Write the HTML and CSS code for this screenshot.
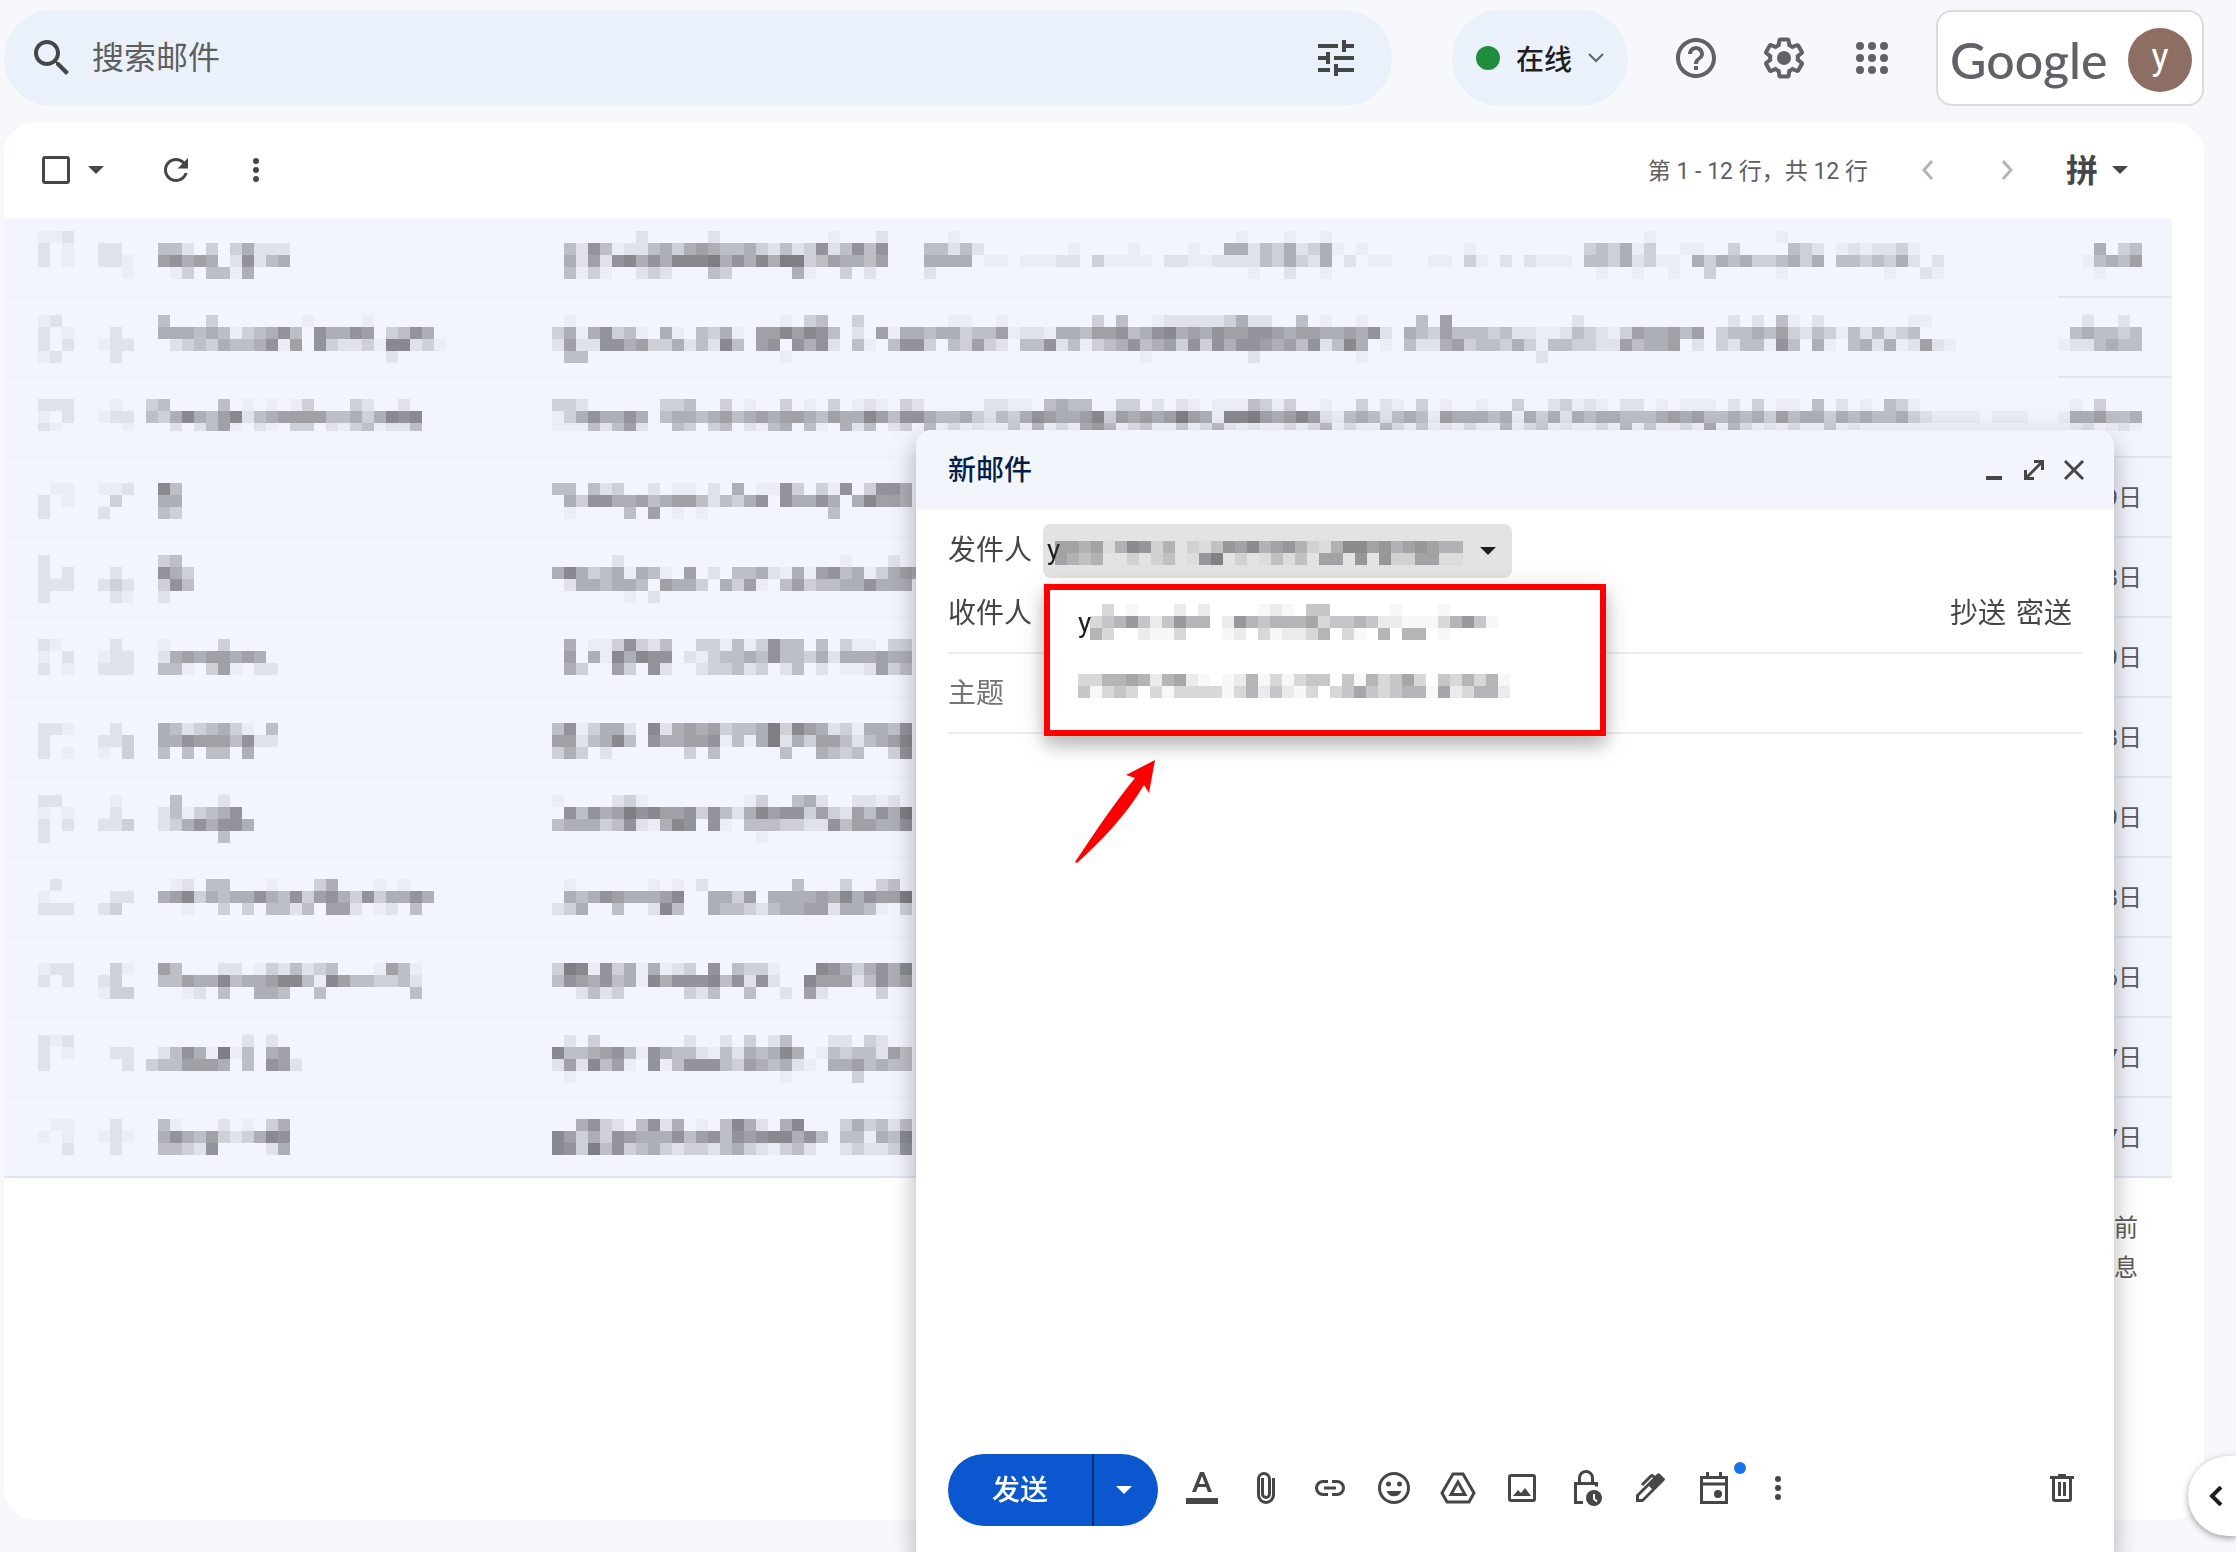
FILE: index.html
```html
<!DOCTYPE html>
<html lang="zh-CN">
<head>
<meta charset="utf-8">
<title>收件箱 - 新邮件</title>
<link rel="stylesheet" href="styles.css">
</head>
<body>
<header class="topbar">
  <form class="search" role="search">
    <button class="icon-btn" type="button" aria-label="搜索"><svg class="ic48" viewBox="0 0 24 24"><path d="M15.5 14h-.79l-.28-.27C15.41 12.59 16 11.11 16 9.5 16 5.91 13.09 3 9.5 3S3 5.91 3 9.5 5.91 16 9.5 16c1.61 0 3.09-.59 4.23-1.57l.27.28v.79l5 4.99L20.49 19l-4.99-5zm-6 0C7.01 14 5 11.99 5 9.5S7.01 5 9.5 5 14 7.01 14 9.5 11.99 14 9.5 14z"/></svg></button>
    <input class="search-input" type="text" placeholder="搜索邮件" aria-label="搜索邮件">
    <button class="icon-btn" type="button" aria-label="搜索选项"><svg class="ic48" viewBox="0 0 24 24"><path d="M3 17v2h6v-2H3zM3 5v2h10V5H3zm10 16v-2h8v-2h-8v-2h-2v6h2zM7 9v2H3v2h4v2h2V9H7zm14 4v-2H11v2h10zm-6-4h2V7h4V5h-4V3h-2v6z"/></svg></button>
  </form>
  <button class="status" type="button"><span class="status-dot"></span>在线<svg class="status-chev" viewBox="0 0 16 10"><path d="M1 1l7 7 7-7"/></svg></button>
  <nav class="tools">
    <button class="icon-btn" type="button" aria-label="支持"><svg class="ic48" viewBox="0 0 24 24"><path d="M11 18h2v-2h-2v2zm1-16C6.48 2 2 6.48 2 12s4.48 10 10 10 10-4.48 10-10S17.52 2 12 2zm0 18c-4.41 0-8-3.59-8-8s3.59-8 8-8 8 3.59 8 8-3.59 8-8 8zm0-14c-2.21 0-4 1.79-4 4h2c0-1.1.9-2 2-2s2 .9 2 2c0 2-3 1.75-3 5h2c0-2.25 3-2.5 3-5 0-2.21-1.79-4-4-4z"/></svg></button>
    <button class="icon-btn" type="button" aria-label="设置"><svg class="ic48" viewBox="0 0 24 24"><path d="M13.85 22.25h-3.7c-.74 0-1.36-.54-1.45-1.27l-.27-1.89c-.27-.14-.53-.29-.79-.46l-1.8.72c-.7.26-1.47-.03-1.81-.65L2.2 15.53c-.35-.66-.2-1.44.36-1.88l1.53-1.19c-.01-.15-.02-.3-.02-.46 0-.15.01-.31.02-.46l-1.52-1.19c-.59-.45-.74-1.26-.37-1.88l1.85-3.19c.34-.62 1.11-.9 1.79-.63l1.81.73c.26-.17.52-.32.78-.46l.27-1.91c.09-.7.71-1.25 1.44-1.25h3.7c.74 0 1.36.54 1.45 1.27l.27 1.89c.27.14.53.29.79.46l1.8-.72c.71-.26 1.48.03 1.82.65l1.84 3.18c.36.66.2 1.44-.36 1.88l-1.52 1.19c.01.15.02.3.02.46s-.01.31-.02.46l1.52 1.19c.56.45.72 1.23.37 1.86l-1.86 3.22c-.34.62-1.11.9-1.8.63l-1.8-.72c-.26.17-.52.32-.78.46l-.27 1.91c-.1.68-.72 1.22-1.46 1.22zm-3.23-2h2.76l.37-2.55.53-.22c.44-.18.88-.44 1.34-.78l.45-.34 2.38.96 1.38-2.4-2.03-1.58.07-.56c.03-.26.06-.51.06-.78s-.03-.53-.06-.78l-.07-.56 2.03-1.58-1.39-2.4-2.39.96-.45-.35c-.42-.32-.87-.58-1.33-.77l-.52-.22-.37-2.55h-2.76l-.37 2.55-.53.21c-.44.19-.88.44-1.34.79l-.45.33-2.38-.95-1.39 2.39 2.03 1.58-.07.56a7 7 0 0 0-.06.79c0 .26.02.53.06.78l.07.56-2.03 1.58 1.38 2.4 2.39-.96.45.35c.43.33.86.58 1.33.77l.53.22.38 2.55z"/><circle cx="12" cy="12" r="3.5"/></svg></button>
    <button class="icon-btn" type="button" aria-label="Google 应用"><svg class="ic48" viewBox="0 0 24 24"><circle cx="6" cy="6" r="2"/><circle cx="12" cy="6" r="2"/><circle cx="18" cy="6" r="2"/><circle cx="6" cy="12" r="2"/><circle cx="12" cy="12" r="2"/><circle cx="18" cy="12" r="2"/><circle cx="6" cy="18" r="2"/><circle cx="12" cy="18" r="2"/><circle cx="18" cy="18" r="2"/></svg></button>
  </nav>
  <a class="account" href="#"><span class="brand">Google</span><span class="avatar">y</span></a>
</header>

<main class="panel">
  <div class="toolbar">
    <div class="tool-left">
      <input class="check-all" type="checkbox" aria-label="全选">
      <button class="icon-btn after-check" type="button" aria-label="选择"><svg class="caret" viewBox="0 0 16 8"><path d="M0 0h16l-8 8z"/></svg></button>
      <button class="icon-btn refresh" type="button" aria-label="刷新"><svg class="ic36" viewBox="0 0 24 24"><path d="M17.65 6.35C16.2 4.9 14.21 4 12 4c-4.42 0-7.99 3.58-7.99 8s3.57 8 7.99 8c3.73 0 6.84-2.55 7.73-6h-2.08c-.82 2.33-3.04 4-5.65 4-3.31 0-6-2.69-6-6s2.69-6 6-6c1.66 0 3.14.69 4.22 1.78L13 11h7V4l-2.35 2.35z"/></svg></button>
      <button class="icon-btn more" type="button" aria-label="更多"><svg class="ic36" viewBox="0 0 36 36"><circle cx="18" cy="9" r="3"/><circle cx="18" cy="18" r="3"/><circle cx="18" cy="27" r="3"/></svg></button>
    </div>
    <div class="tool-right">
      <span class="count">第 1 - 12 行，共 12 行</span>
      <button class="icon-btn page" type="button" aria-label="较新"><svg class="ic48" viewBox="0 0 48 48"><path d="M30 15l-8 9 8 9"/></svg></button>
      <button class="icon-btn page" type="button" aria-label="较旧"><svg class="ic48" viewBox="0 0 48 48"><path d="M19 15l8 9-8 9"/></svg></button>
      <button class="ime" type="button"><span>拼</span><svg class="caret" viewBox="0 0 16 8"><path d="M0 0h16l-8 8z"/></svg></button>
    </div>
  </div>

  <table class="mails">
    <colgroup><col class="c-check"><col class="c-star"><col class="c-from"><col><col class="c-date"></colgroup>
    <tbody>
      <tr data-top="13">
        <td class="check"><svg data-m="112|2.1|2.1"></svg></td><td><svg data-m="|22|221|..1"></svg></td>
        <td><svg data-m="|.442.3.35222|.67565.27245|..13.4415"></svg></td>
        <td><svg data-m="g2e2i1c2e1w1c1b1z1j1|.427412245356544532423724747c44242g1d1d1b5524352351a1h1i343513b11b3d432a1212231|.526278575888957585993465546c5555a11a11122a31111a22112222435325a2a11c11a31a2a2111a44352311a53545334535a4434352a2|.4131b232c43e51b3a2d2z1b2b1v1b1b1b3e1h1b21"></svg></td>
        <td class="date"><svg data-m="|...5.34|..14546|...1..."></svg></td>
      </tr>
      <tr data-top="17">
        <td class="check"><svg data-m="12|2.1|2.2|12"></svg></td><td><svg data-m="|.2|122|.2"></svg></td>
        <td><svg data-m="a4c3g1d1|.555454134574.75576.3475|..23435445716.73223188231|t2"></svg></td>
        <td><svg data-m="a1q1a34b3g11b1g3a4b1222223522b4a1b1d4a6j2l2a2a41a2g11|35157341.51.4351.6686874.2.6155455344612215546674578565766776566556572a5436444342211243213655646a34454632431424234|2622775633524284.67.7572.41.4773.43632.44724134574563737577656472485.1.42256344353144332264556.2.3244174.51.452512621|a44p1zc1h2h1n2"></svg></td>
        <td class="date"><svg data-m="..2..2.|.454434|1224544"></svg></td>
      </tr>
      <tr data-top="21" class="half">
        <td class="check"><svg data-m="222|1.2|21"></svg></td><td><svg data-m=".1|122|..1"></svg></td>
        <td><svg data-m="34d4a1a1a13c32b2|43585468245666644535878|..2.2461.21.33.21341224"></svg></td>
        <td><svg data-m="332f334b3a1b3a1a3a121a32e2211a4544b33a2a21a1114313b1b3a21a3a1b1b3b23121a22a1a111a2a3a11a4a2a1a431|13575575.45545645656654655864775445324357655683656569651889656862145424541655545153525455444565644545364553545445321111a111|11142462b43a34a2145a41a524a23a4a2a1b3a4a2a564a23b3a241a1b2a24a2b42a3a1a2b4a23a1b2a4a3b2a5a42a1a2b3a1"></svg></td>
        <td class="date"><svg data-m=".1.3...|1556445|.12.121"></svg></td>
      </tr>
      <tr data-top="25">
        <td class="check"><svg data-m=".11|2.1|2"></svg></td><td><svg data-m="112|.3|2"></svg></td>
        <td><svg data-m="a84|a55|a43"></svg></td>
        <td><svg data-m="44.423..2.11.2.5.1173.317.3775|.53775564566424357.75575.58665|a1d4a6a1a1j4"></svg></td>
        <td class="date"><span>9日</span></td>
      </tr>
      <tr data-top="17">
        <td class="check"><svg data-m="2|2.2|222|2"></svg></td><td><svg data-m="|.2|232|.21"></svg></td>
        <td><svg data-m="a34|a753|a374|a2"></svg></td>
        <td><svg data-m="e2r1c2|5853451541.6.2.44521516745135655|.2554554.6553.5361.46344557555|f1a2"></svg></td>
        <td class="date"><span>8日</span></td>
      </tr>
      <tr data-top="21">
        <td class="check"><svg data-m="21|1.2|2.1"></svg></td><td><svg data-m=".2|122|222"></svg></td>
        <td><svg data-m="a1d3|a256566565|a441a361a22"></svg></td>
        <td><svg data-m=".5.1137324..331413744.4.311.33|.6.5185877.2134454744352555655|.53..63.72..233423.24.2.112634"></svg></td>
        <td class="date"><span>9日</span></td>
      </tr>
      <tr data-top="25">
        <td class="check"><svg data-m="221|2|2.1"></svg></td><td><svg data-m=".2|223|1.3"></svg></td>
        <td><svg data-m="a54234531a4|a5576664722|a4a4a44a5"></svg></td>
        <td><svg data-m="4713552.8256563445938652315547|6624584.7556671415925366424568|353a2f3a4e4b5434b37"></svg></td>
        <td class="date"><span>8日</span></td>
      </tr>
      <tr data-top="17">
        <td class="check"><svg data-m="22|1.1|2.2|2"></svg></td><td><svg data-m=".1|.2|223"></svg></td>
        <td><svg data-m="b4c2|a2413457|a23575775|f4"></svg></td>
        <td><svg data-m="1d231h13b452b2212|.74756978667374258677363264759|455534721587.71.44433227466557|q1"></svg></td>
        <td class="date"><span>9日</span></td>
      </tr>
      <tr data-top="21">
        <td class="check"><svg data-m=".2|1|222"></svg></td><td><svg data-m="|.22|23"></svg></td>
        <td><svg data-m="b12a44c1c35c1a1|a56835455754736753735575|c1b3a3a4424a662a12a4"></svg></td>
        <td><svg data-m="a1f1a1a2g4c3b34|.5457655568..5536.555565857669|235..4..284..544324556625541.3"></svg></td>
        <td class="date"><span>8日</span></td>
      </tr>
      <tr data-top="25">
        <td class="check"><svg data-m="122|2.2"></svg></td><td><svg data-m=".31|23|133"></svg></td>
        <td><svg data-m=".64...22.1324234...1641|.4465584556884186443342|c12a4b554b4g4"></svg></td>
        <td><svg data-m="398173515123.7.4331...87535758|4765745185777847272..866624756|b2423e324b4b2a62d3"></svg></td>
        <td class="date"><span>6日</span></td>
      </tr>
      <tr data-top="17">
        <td class="check"><svg data-m="212|2.1|2"></svg></td><td><svg data-m="|.22|..2"></svg></td>
        <td><svg data-m="h2a2|.24751914.56|3446665.4.762"></svg></td>
        <td><svg data-m="a2a3g2b2a3a24c22a32|844567417544214254585.14344264|2628461.71477743654521.5564544|a1q1e3"></svg></td>
        <td class="date"><span>7日</span></td>
      </tr>
      <tr data-top="21">
        <td class="check"><svg data-m=".11|1.1|..2"></svg></td><td><svg data-m=".2|121|.2"></svg></td>
        <td><svg data-m="a41c2a1a35|a57546323587|a44327d25"></svg></td>
        <td><svg data-m="b5732a4725a1a4852a58c353424|86353765557467476788574.441548|8739473453233245321342..232237"></svg></td>
        <td class="date"><span>7日</span></td>
      </tr>
    </tbody>
  </table>
  <footer class="activity"><p>上次帐号活动时间：30 分钟前</p><p>详细信息</p></footer>
</main>

<section class="compose" aria-label="新邮件">
  <header class="compose-head">
    <h2>新邮件</h2>
    <button class="icon-btn" type="button" aria-label="最小化"><svg class="ic40" viewBox="0 0 40 40"><path d="M12 26h16v4H12z"/></svg></button>
    <button class="icon-btn" type="button" aria-label="全屏"><svg class="ic40" viewBox="0 0 40 40"><path d="M20 10h10v10h-3v-5L15 27h5v3H10V20h3v5l12-12h-5z"/></svg></button>
    <button class="icon-btn" type="button" aria-label="关闭"><svg class="ic40 line" viewBox="0 0 40 40"><path d="M11 11l18 18M29 11L11 29"/></svg></button>
  </header>
  <div class="fields">
    <div class="from-row">
      <label for="from">发件人</label>
      <div class="from-wrap">
        <select id="from"><option>y</option></select>
        <svg class="m-over" data-m="5545147624.21365745642147756456544|5434..2.23.168.2.1313.55.6.6225511"></svg>
        <svg class="caret" viewBox="0 0 16 8"><path d="M0 0h16l-8 8z"/></svg>
        <ul class="menu">
          <li><button type="button"><span>y</span><svg data-m="a3a1c2a2d121a44e1c1|3457424755.27545556344542211135741|53b2113c12a312235a31a5a55a1"></svg></button></li>
          <li><button type="button" aria-label="第二个发件地址"><svg data-m="33556525621.125131344.4153463.435351|41343.31333313524213.346434551623552"></svg></button></li>
        </ul>
      </div>
    </div>
    <div class="field to">
      <label for="to">收件人</label><input id="to" type="text">
      <button type="button">抄送</button><button type="button">密送</button>
    </div>
    <div class="field"><input type="text" placeholder="主题" aria-label="主题"></div>
  </div>
  <textarea class="body" aria-label="邮件正文"></textarea>
  <svg class="pointer" viewBox="0 0 82 104" aria-hidden="true"><path d="M81 0l-6 33-5-8C50 58 28 80 3 103L1 102C20 74 38 46 61 18l-9-3z"/></svg>
  <div class="actions">
    <div class="send"><button class="send-main" type="button">发送</button><button class="send-more" type="button" aria-label="更多发送选项"><svg class="caret" viewBox="0 0 16 8"><path d="M0 0h16l-8 8z"/></svg></button></div>
    <div class="formats">
      <button class="icon-btn" type="button" aria-label="格式选项"><svg class="ic40" viewBox="0 0 40 40"><path d="M4 30h32v6H4z"/><path d="M18 4h4l8 20h-4l-2-5h-8l-2 5h-4zm2 4l-3 8h6z"/></svg></button>
      <button class="icon-btn" type="button" aria-label="附加文件"><svg class="ic40 line" viewBox="0 0 40 40"><path d="M27.500 10v17a7.500 7.500 0 0 1-15 0V11a5.500 5.500 0 0 1 11 0v15a3.500 3.500 0 0 1-7 0V10"/></svg></button>
      <button class="icon-btn" type="button" aria-label="插入链接"><svg class="ic40 line" viewBox="0 0 40 40"><path d="M18 13.500h-5a6.500 6.500 0 0 0 0 13h5M22 13.500h5a6.500 6.500 0 0 1 0 13h-5M14 20h12"/></svg></button>
      <button class="icon-btn" type="button" aria-label="插入表情符号"><svg class="ic40" viewBox="0 0 40 40"><circle class="ring" cx="20" cy="20" r="14.500"/><circle cx="14.500" cy="16" r="2.500"/><circle cx="25.500" cy="16" r="2.500"/><path d="M12.500 23h15a8 8 0 0 1-15 0z"/></svg></button>
      <button class="icon-btn" type="button" aria-label="插入云端硬盘文件"><svg class="ic40 line" viewBox="0 0 40 40"><path d="M15 6h10l11 19-5 9H9l-5-9zM20 14l-7 12.500h14z"/></svg></button>
      <button class="icon-btn" type="button" aria-label="插入照片"><svg class="ic40" viewBox="0 0 40 40"><rect class="ring" x="7.500" y="7.500" width="25" height="25" rx="1.500"/><path d="M11 28l5-6 3 3 4-5 6 8z"/></svg></button>
      <button class="icon-btn" type="button" aria-label="机密模式"><svg class="ic40" viewBox="0 0 40 40"><path class="ring" d="M17 34.500H9.500v-19h21v3M13.500 15V10a6.500 6.500 0 0 1 13 0v5"/><circle cx="28" cy="30" r="8"/><path class="cut" d="M28 26v5l3 2.500"/></svg></button>
      <button class="icon-btn" type="button" aria-label="插入签名"><svg class="ic40" viewBox="0 0 40 40"><path d="M30 6l4 4q2 1 0 3L13 34H6v-7L23 10l4-4q1.500-1.500 3 0zM9 28v3h3L22 21l-3-3z" fill-rule="evenodd"/><path class="ring" d="M12 17l9-9q1-1 2 0l2 2"/></svg></button>
      <button class="icon-btn badge" type="button" aria-label="安排时间"><svg class="ic40" viewBox="0 0 40 40"><path class="ring" d="M7.500 9.500h25v25h-25zM7 16h26M13.500 4v6M26.500 4v6"/><circle cx="24" cy="26" r="4"/></svg></button>
      <button class="icon-btn" type="button" aria-label="更多选项"><svg class="ic40" viewBox="0 0 40 40"><circle cx="20" cy="11" r="3"/><circle cx="20" cy="20" r="3"/><circle cx="20" cy="29" r="3"/></svg></button>
    </div>
    <button class="icon-btn trash" type="button" aria-label="舍弃草稿"><svg class="ic40" viewBox="0 0 40 40"><path d="M16 6h8v2h8v3H8V8h8z"/><path class="ring" d="M11.500 10v21q0 1.500 1.500 1.500h14q1.500 0 1.500-1.500V10M17.500 14v14M22.500 14v14"/></svg></button>
  </div>
</section>

<button class="side-tab" type="button" aria-label="显示侧边栏"><svg viewBox="0 0 14 20"><path d="M12 1L3 10l9 9"/></svg></button>
<script src="script.js"></script>
</body>
</html>
```
FILE: styles.css
```css
* { box-sizing: border-box; }
body {
  margin: 0;
  min-height: 100vh;
  background: #f6f8fc;
  color: #444746;
  font-family: Roboto, "Noto Sans CJK SC", sans-serif;
  font-size: 28px;
  overflow: hidden;
}
button, input, select, textarea { font: inherit; color: inherit; }
button { border: 0; padding: 0; background: none; }
svg { display: block; fill: currentColor; }
.icon-btn { display: flex; flex: none; }
.ic48 { width: 48px; height: 48px; }
.ic40 { width: 40px; height: 40px; }
.ic36 { width: 36px; height: 36px; }
.caret { width: 16px; height: 8px; }
.line, .ring { fill: none; stroke: currentColor; stroke-width: 3; }

/* top bar */
.topbar { display: flex; align-items: center; padding: 10px 32px 0 4px; }
.search { flex: 1; display: flex; align-items: center; height: 96px; padding: 0 32px 0 24px; border-radius: 48px; background: #eaf1fb; }
.search-input { flex: 1; min-width: 0; margin-left: 14px; border: 0; background: none; font-size: 32px; outline: 0; }
.search-input::placeholder { color: #5e5e5e; opacity: 1; }
.status { display: flex; align-items: center; width: 176px; height: 96px; margin-left: 60px; padding-left: 24px; border-radius: 48px; background: #eaf1fb; color: #1f1f1f; font-weight: 500; }
.status-dot { width: 24px; height: 24px; margin-right: 16px; border-radius: 50%; background: #1e8e3e; }
.status-chev { width: 16px; height: 10px; margin-left: 16px; fill: none; stroke: #5f6368; stroke-width: 2; }
.tools { display: flex; gap: 40px; margin: 0 40px 0 44px; color: #5f6368; }
.account { display: flex; align-items: center; justify-content: space-between; width: 268px; height: 96px; padding: 4px 10px 0 12px; border: 2px solid #dadce0; border-radius: 16px; background: #fff; text-decoration: none; }
.brand { font: 500 50px/80px Lato, sans-serif; color: #5f6368; }
.avatar { width: 64px; height: 64px; border-radius: 50%; background: #8d6e63; color: #fff; font-size: 36px; line-height: 58px; text-align: center; }

/* mail list */
.panel { min-height: calc(100vh - 154px); margin: 16px 32px 32px 4px; border-radius: 32px; background: #fff; }
.toolbar { display: flex; justify-content: space-between; align-items: center; height: 96px; padding: 0 76px 0 38px; }
.tool-left, .tool-right { display: flex; align-items: center; }
.tool-right { gap: 34px; }
.check-all { appearance: none; width: 28px; height: 28px; margin: 0; border: 3px solid #444746; border-radius: 3px; }
.after-check { margin-left: 18px; }
.refresh { margin-left: 54px; }
.more { margin-left: 44px; }
.count { padding-bottom: 2px; font-size: 23px; color: #5e5e5e; }
.page { color: #b4b5b5; }
.page svg { fill: none; stroke: currentColor; stroke-width: 3; }
.ime { display: flex; align-items: center; gap: 14px; font-size: 32px; font-weight: 700; }
.ime span { padding-bottom: 4px; }

.mails { width: calc(100% - 32px); table-layout: fixed; border-collapse: separate; border-spacing: 0; background: #f2f5fd; }
.c-check { width: 94px; }
.c-star { width: 48px; }
.c-from { width: 406px; }
.c-date { width: 114px; }
.mails tr { height: 80px; }
.mails td { padding: 0; border-bottom: 2px solid #eef2fa; overflow: hidden; }
.mails td svg { height: 78px; }
.mails .half svg { height: 53px; margin-bottom: 25px; }
.mails td.check { padding-left: 34px; }
.mails td.date { padding-right: 30px; border-color: #dfe6f1; text-align: right; font-size: 24px; color: #5e5e5e; }
.mails td.date svg { margin-left: auto; }
.date span { display: block; padding-bottom: 4px; }
.mails tr:last-child td { border-color: #dfe7f1; }
.activity { padding: 30px 66px 0; text-align: right; font-size: 24px; line-height: 40px; color: #5e5e5e; }
.activity p { margin: 0; }

/* compose window */
.compose {
  position: fixed; right: 122px; bottom: 0; top: 430px; width: 1198px;
  display: flex; flex-direction: column;
  border-radius: 16px 16px 0 0; background: #fff;
  box-shadow: 0 16px 20px 2px rgba(0,0,0,.14), 0 6px 28px 4px rgba(0,0,0,.12), 0 10px 10px -6px rgba(0,0,0,.2);
}
.compose-head { display: flex; align-items: center; height: 80px; padding: 0 20px 0 32px; border-radius: 16px 16px 0 0; background: #f2f6fc; }
.compose-head h2 { flex: 1; margin: 0; padding-bottom: 4px; font-size: 28px; font-weight: 500; color: #041e49; }
.fields { padding: 14px 32px 0; }
.from-row { display: flex; align-items: center; height: 54px; }
.from-row label { width: 95px; padding-bottom: 6px; }
.from-wrap { position: relative; width: 469px; height: 54px; }
.from-wrap select { appearance: none; width: 100%; height: 54px; padding: 0 4px 4px; border: 0; border-radius: 8px; background: #e3e3e3; color: #1f1f1f; outline: 0; }
.m-over { position: absolute; left: 12px; top: 17px; }
.from-wrap > .caret { position: absolute; right: 16px; top: 23px; color: #1f1f1f; }
.menu {
  position: absolute; z-index: 2; left: 1px; top: 60px; width: 562px; height: 152px;
  margin: 0; padding: 6px 28px; list-style: none;
  border: 6px solid #fe0000; background: #fff;
  box-shadow: 0 10px 16px rgba(0,0,0,.2), 0 6px 28px rgba(0,0,0,.14);
}
.menu li { height: 64px; }
.menu button { display: flex; align-items: center; height: 52px; color: #1f1f1f; }
.menu span { width: 12px; }
.field { display: flex; align-items: center; height: 80px; border-bottom: 2px solid #ebecec; }
.field.to { height: 76px; padding-bottom: 8px; }
.field input { flex: 1; min-width: 0; padding: 0; border: 0; outline: 0; background: none; }
.field input::placeholder { color: #757575; opacity: 1; }
.field button { margin-right: 10px; }
.body { flex: 1; border: 0; outline: 0; resize: none; background: none; }
.pointer { position: absolute; left: 158px; top: 330px; width: 82px; height: 104px; color: #fe0000; }
.actions { display: flex; align-items: center; padding: 0 32px 26px; }
.send { display: flex; height: 72px; border-radius: 36px; overflow: hidden; background: #0b57d0; color: #fff; }
.send-main { width: 146px; padding-bottom: 4px; border-right: 2px solid #062e6f; font-weight: 500; }
.send-more { display: flex; align-items: center; width: 64px; padding-left: 22px; }
.formats { flex: 1; display: flex; gap: 24px; padding: 0 0 4px 24px; }
.trash { padding-bottom: 4px; }
.badge { position: relative; }
.badge::after { content: ""; position: absolute; right: -12px; top: -6px; width: 12px; height: 12px; border-radius: 50%; background: #1a73e8; }
.cut { fill: none; stroke: #fff; stroke-width: 2; }

.side-tab { position: fixed; right: 0; bottom: 16px; display: flex; align-items: center; width: 48px; height: 80px; padding-left: 21px; border-radius: 40px 0 0 40px; background: #fff; color: #1f1f1f; box-shadow: 0 2px 6px rgba(60,64,67,.5); }
.side-tab svg { width: 14px; height: 20px; fill: none; stroke: currentColor; stroke-width: 4; }
```
FILE: script.js
```js
// Draws the pixelated placeholders that stand in for private text.
// Each string is one line of 12px cells: a digit is a shade,
// "." is one empty cell, a letter is a gap (a = 1, b = 2, ...).
const CELL = 12;
const SHADE = [0, .04, .1, .2, .29, .38, .46, .52, .58, .64];
const NS = "http://www.w3.org/2000/svg";

document.querySelectorAll("svg[data-m]").forEach(svg => {
  const row = svg.closest("tr");
  const top = row ? Number(row.dataset.top) : 0;
  const lines = svg.dataset.m.split("|");
  let widest = 0;
  lines.forEach((line, r) => {
    let col = 0;
    for (const ch of line) {
      if (ch >= "a" && ch <= "z") { col += ch.charCodeAt(0) - 96; continue; }
      if (ch >= "1" && ch <= "9") {
        const cell = document.createElementNS(NS, "rect");
        cell.setAttribute("x", col * CELL);
        cell.setAttribute("y", top + r * CELL);
        cell.setAttribute("width", CELL);
        cell.setAttribute("height", CELL);
        cell.setAttribute("fill", "#3c3c42");
        cell.setAttribute("fill-opacity", SHADE[ch]);
        cell.setAttribute("shape-rendering", "crispEdges");
        svg.appendChild(cell);
      }
      col += 1;
    }
    widest = Math.max(widest, col);
  });
  svg.setAttribute("width", widest * CELL);
  svg.setAttribute("height", lines.length * CELL);
});
```
